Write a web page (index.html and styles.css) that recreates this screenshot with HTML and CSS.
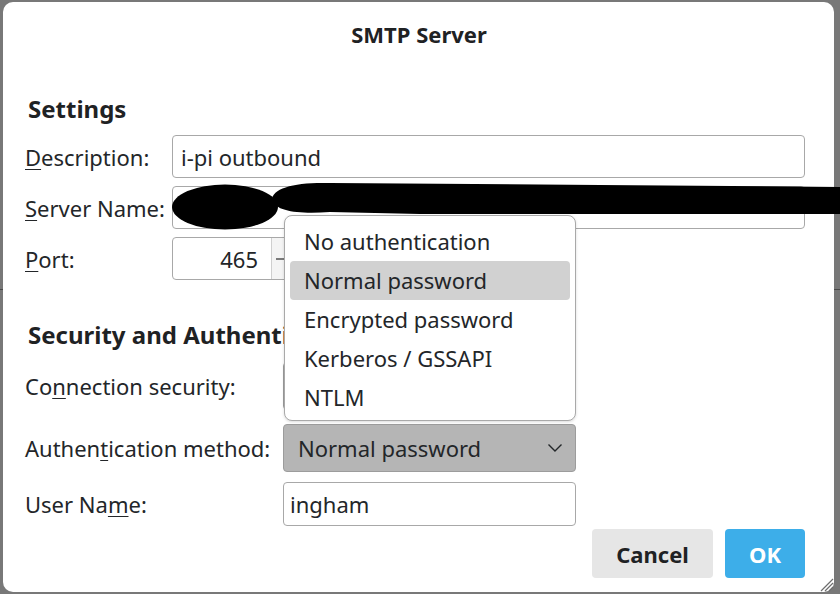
FILE: index.html
```html
<!DOCTYPE html>
<html>
<head>
<meta charset="utf-8">
<link rel="stylesheet" href="styles.css">
</head>
<body>
<div class="bgline"></div>
<div class="dialog">
  <div class="title">SMTP Server</div>
  <div class="heading">Settings</div>
  <div class="settings-grid">
    <label class="label"><u>D</u>escription:</label>
    <div class="input">i-pi outbound</div>
    <label class="label"><u>S</u>erver Name:</label>
    <div class="input server"></div>
    <label class="label"><u>P</u>ort:</label>
    <div class="spinbox">
      <div class="spin-value">465</div>
      <div class="spin-btn minus"></div>
      <div class="spin-btn plus"></div>
    </div>
  </div>
  <div class="heading heading-sec">Security and Authentication</div>
  <div class="sec-row row-conn">
    <label class="label wide">Co<u>n</u>nection security:</label>
    <div class="combo plain"></div>
  </div>
  <div class="sec-row row-auth">
    <label class="label wide">Authen<u>t</u>ication method:</label>
    <div class="combo pressed"><span>Normal password</span>
      <svg class="chev" width="16" height="10" viewBox="0 0 16 10"><path d="M1.5 1.5 L8 8 L14.5 1.5" fill="none" stroke="#232629" stroke-width="1.4"/></svg>
    </div>
  </div>
  <div class="sec-row row-user">
    <label class="label wide">User Na<u>m</u>e:</label>
    <div class="input user">ingham</div>
  </div>
  <div class="buttons">
    <div class="btn cancel">Cancel</div>
    <div class="btn ok">OK</div>
  </div>

  <svg class="scribble" width="670" height="52" viewBox="170 180 670 52">
    <ellipse cx="225" cy="207" rx="53" ry="22.5" fill="#000"/>
    <path d="M272 200 C272 188 295 182 330 183 L600 185 L840 187 L840 214 L600 214 L420 214 L330 212 C300 214 276 212 272 200 Z" fill="#000"/>
  </svg>

  <div class="popup">
    <div class="item">No authentication</div>
    <div class="item selected">Normal password</div>
    <div class="item">Encrypted password</div>
    <div class="item">Kerberos / GSSAPI</div>
    <div class="item">NTLM</div>
  </div>

  <svg class="grip" width="16" height="16" viewBox="0 0 16 16">
    <path d="M15 3 L3 15 M15 7 L7 15 M15 11 L11 15" stroke="#6e6e6e" stroke-width="1.2"/>
  </svg>
</div>
</body>
</html>
```

FILE: styles.css
```css
html, body {
  margin: 0;
  padding: 0;
}
body {
  width: 840px;
  height: 594px;
  overflow: hidden;
  background: #787878;
  font-family: "Noto Sans", "DejaVu Sans", sans-serif;
  color: #232629;
  position: relative;
}
.bgline {
  position: absolute;
  left: 0;
  top: 289px;
  width: 840px;
  height: 1px;
  background: #4a4a4a;
}
.dialog {
  position: relative;
  margin: 2px 6px 0 3px;
  height: 590px;
  background: #fff;
  border-radius: 10px;
  box-sizing: border-box;
  padding: 18px 29px 0 22px;
}
.title {
  text-align: center;
  font-weight: bold;
  font-size: 22px;
  line-height: 28px;
  padding-left: 8px;
  color: #1f2224;
}
.heading {
  font-weight: bold;
  font-size: 24px;
  line-height: 30px;
  margin-top: 46px;
  margin-left: 3px;
  color: #1f2224;
  white-space: nowrap;
}
.heading-sec {
  margin-top: 40px;
  width: 256px;
  overflow: hidden;
}
.label {
  font-size: 22px;
  line-height: 26px;
  display: flex;
  align-items: center;
  white-space: nowrap;
}
.label u {
  text-decoration-thickness: 1px;
  text-underline-offset: 3px;
}
.settings-grid {
  display: grid;
  grid-template-columns: 147px 1fr;
  grid-auto-rows: 43px;
  row-gap: 8px;
  margin-top: 11px;
}
.input {
  border: 1px solid #a8a8a8;
  border-radius: 4px;
  background: #fff;
  font-size: 22px;
  display: flex;
  align-items: center;
  padding: 0 8px;
  box-sizing: border-box;
}
.spinbox {
  display: flex;
  width: 200px;
  border: 1px solid #a8a8a8;
  border-radius: 4px;
  box-sizing: border-box;
  font-size: 22px;
}
.spin-value {
  width: 98px;
  display: flex;
  align-items: center;
  justify-content: flex-end;
  padding-right: 13px;
  box-sizing: border-box;
}
.spin-btn {
  flex: 1;
  position: relative;
  background: #f4f4f4;
  border-left: 1px solid #cfcfcf;
}
.spin-btn.minus::after {
  content: "";
  position: absolute;
  left: 4px;
  top: 20px;
  width: 8px;
  height: 1.5px;
  background: #7a7a7a;
}
.sec-row {
  display: flex;
}
.sec-row .wide {
  width: 258px;
}
.row-conn {
  margin-top: 12px;
  height: 48px;
}
.row-auth {
  margin-top: 14px;
  height: 48px;
}
.row-user {
  margin-top: 10px;
  height: 44px;
}
.combo {
  width: 293px;
  border: 1px solid #9c9c9c;
  border-radius: 4px;
  box-sizing: border-box;
  display: flex;
  align-items: center;
  justify-content: space-between;
  padding: 0 12px 0 14px;
  font-size: 22px;
}
.combo.pressed {
  background: #b5b5b5;
}
.chev {
  display: block;
}
.input.user {
  width: 293px;
  padding-left: 6px;
}
.buttons {
  display: flex;
  justify-content: flex-end;
  gap: 12px;
  margin-top: 3px;
}
.btn {
  height: 49px;
  border-radius: 4px;
  display: flex;
  align-items: center;
  justify-content: center;
  font-weight: bold;
  font-size: 22px;
}
.btn.cancel {
  width: 121px;
  background: #e6e6e6;
  color: #1f2224;
}
.btn.ok {
  width: 80px;
  background: #3daee9;
  color: #fff;
}
.scribble {
  position: absolute;
  left: 167px;
  top: 178px;
  overflow: visible;
}
.popup {
  position: absolute;
  left: 281px;
  top: 213px;
  width: 292px;
  height: 206px;
  box-sizing: border-box;
  border: 1px solid #a9a9a9;
  border-radius: 8px;
  background: #fff;
  padding: 6px 5px;
  box-shadow: 0 1px 3px rgba(0,0,0,0.15);
}
.item {
  height: 39px;
  line-height: 39px;
  font-size: 22px;
  padding-left: 14px;
  border-radius: 4px;
  white-space: nowrap;
}
.item.selected {
  background: #d1d1d1;
}
.grip {
  position: absolute;
  right: 0;
  bottom: 0;
}
```
